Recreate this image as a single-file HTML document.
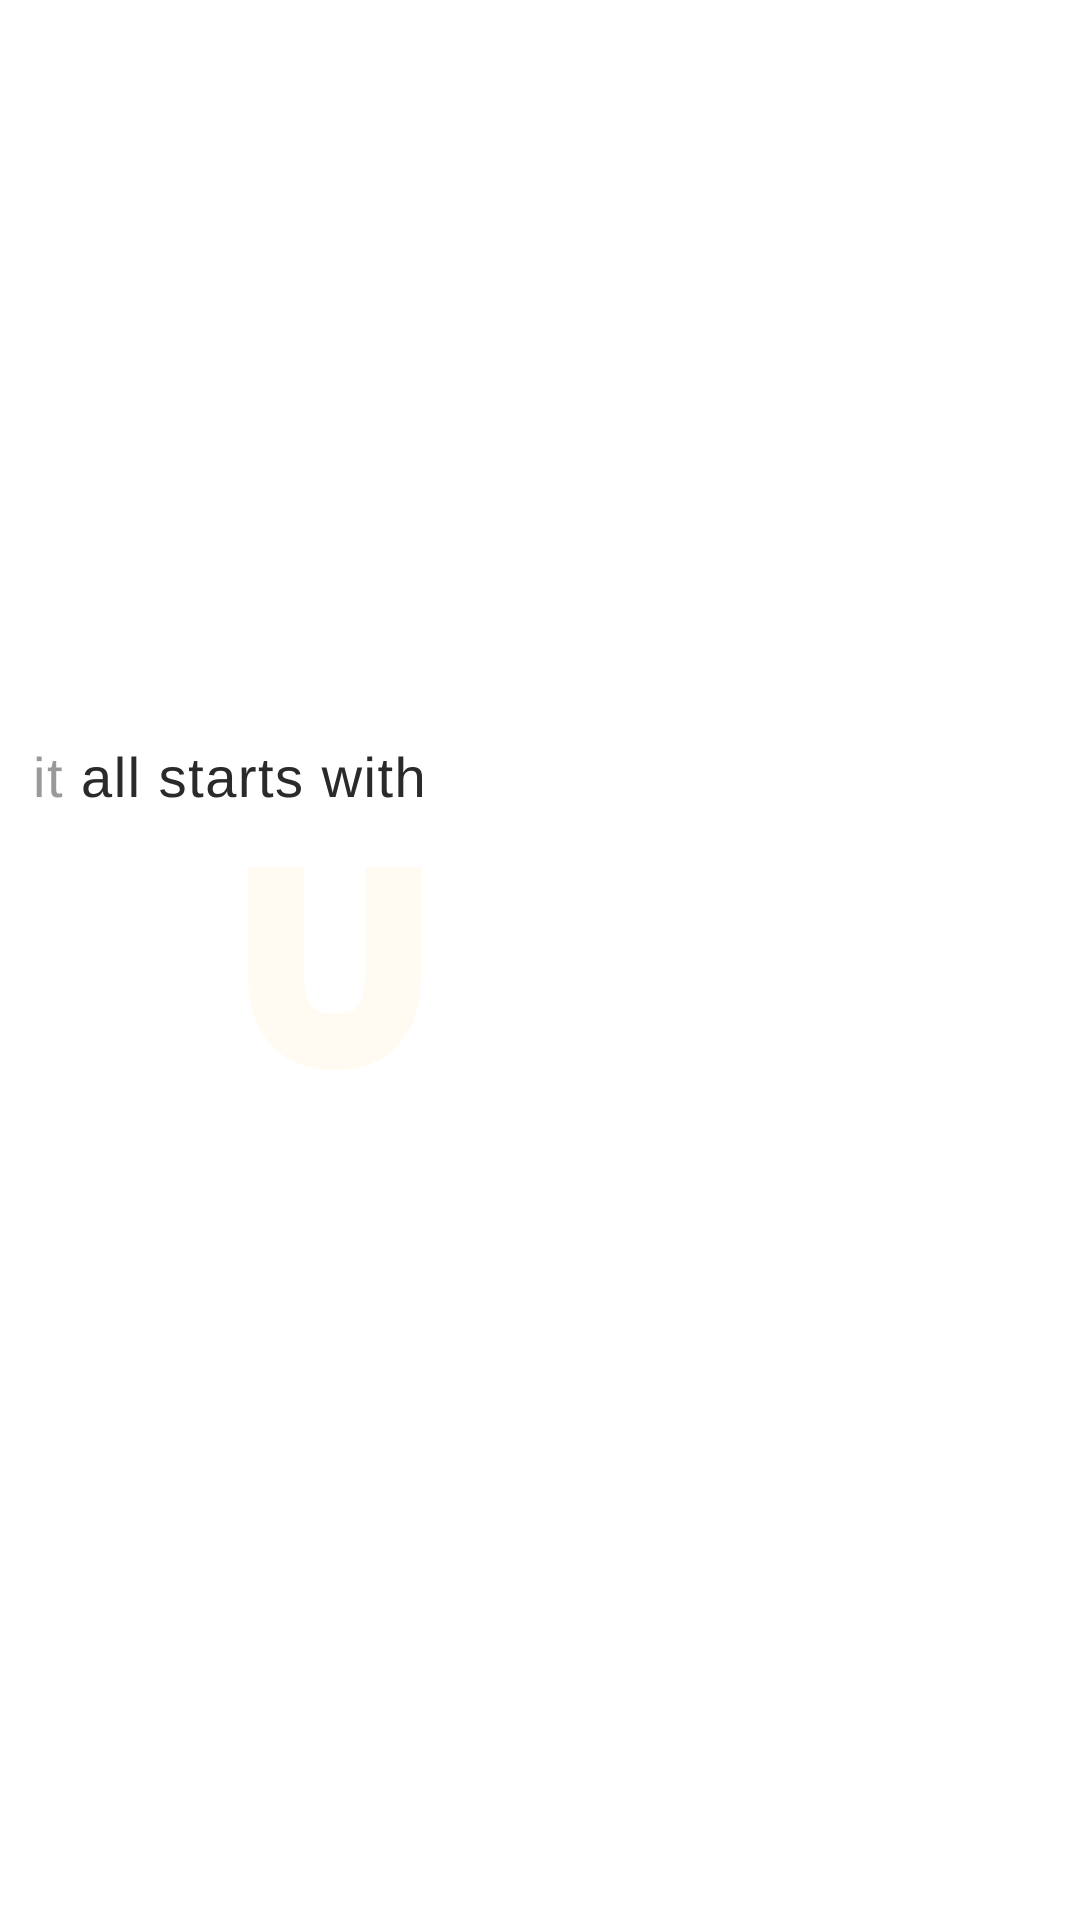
<!DOCTYPE html>
<html><head><meta charset="utf-8"><style>
html,body{margin:0;padding:0;background:#fff;width:1080px;height:1920px;overflow:hidden;}
.t{position:absolute;left:33px;top:743px;font-family:"Liberation Sans",sans-serif;font-size:56px;line-height:70px;font-weight:300;letter-spacing:1.5px;color:#2a2a2a;white-space:nowrap;}
.t span{color:#999;}
svg{position:absolute;left:0;top:0;}
</style></head><body>
<svg width="1080" height="1920"><path d="M276 867 V975 Q276 1042 335 1042 Q393 1042 393 975 V867" fill="none" stroke="#fffbf2" stroke-width="56"/></svg>
<div class="t"><span>it</span> all starts with</div>
</body></html>
